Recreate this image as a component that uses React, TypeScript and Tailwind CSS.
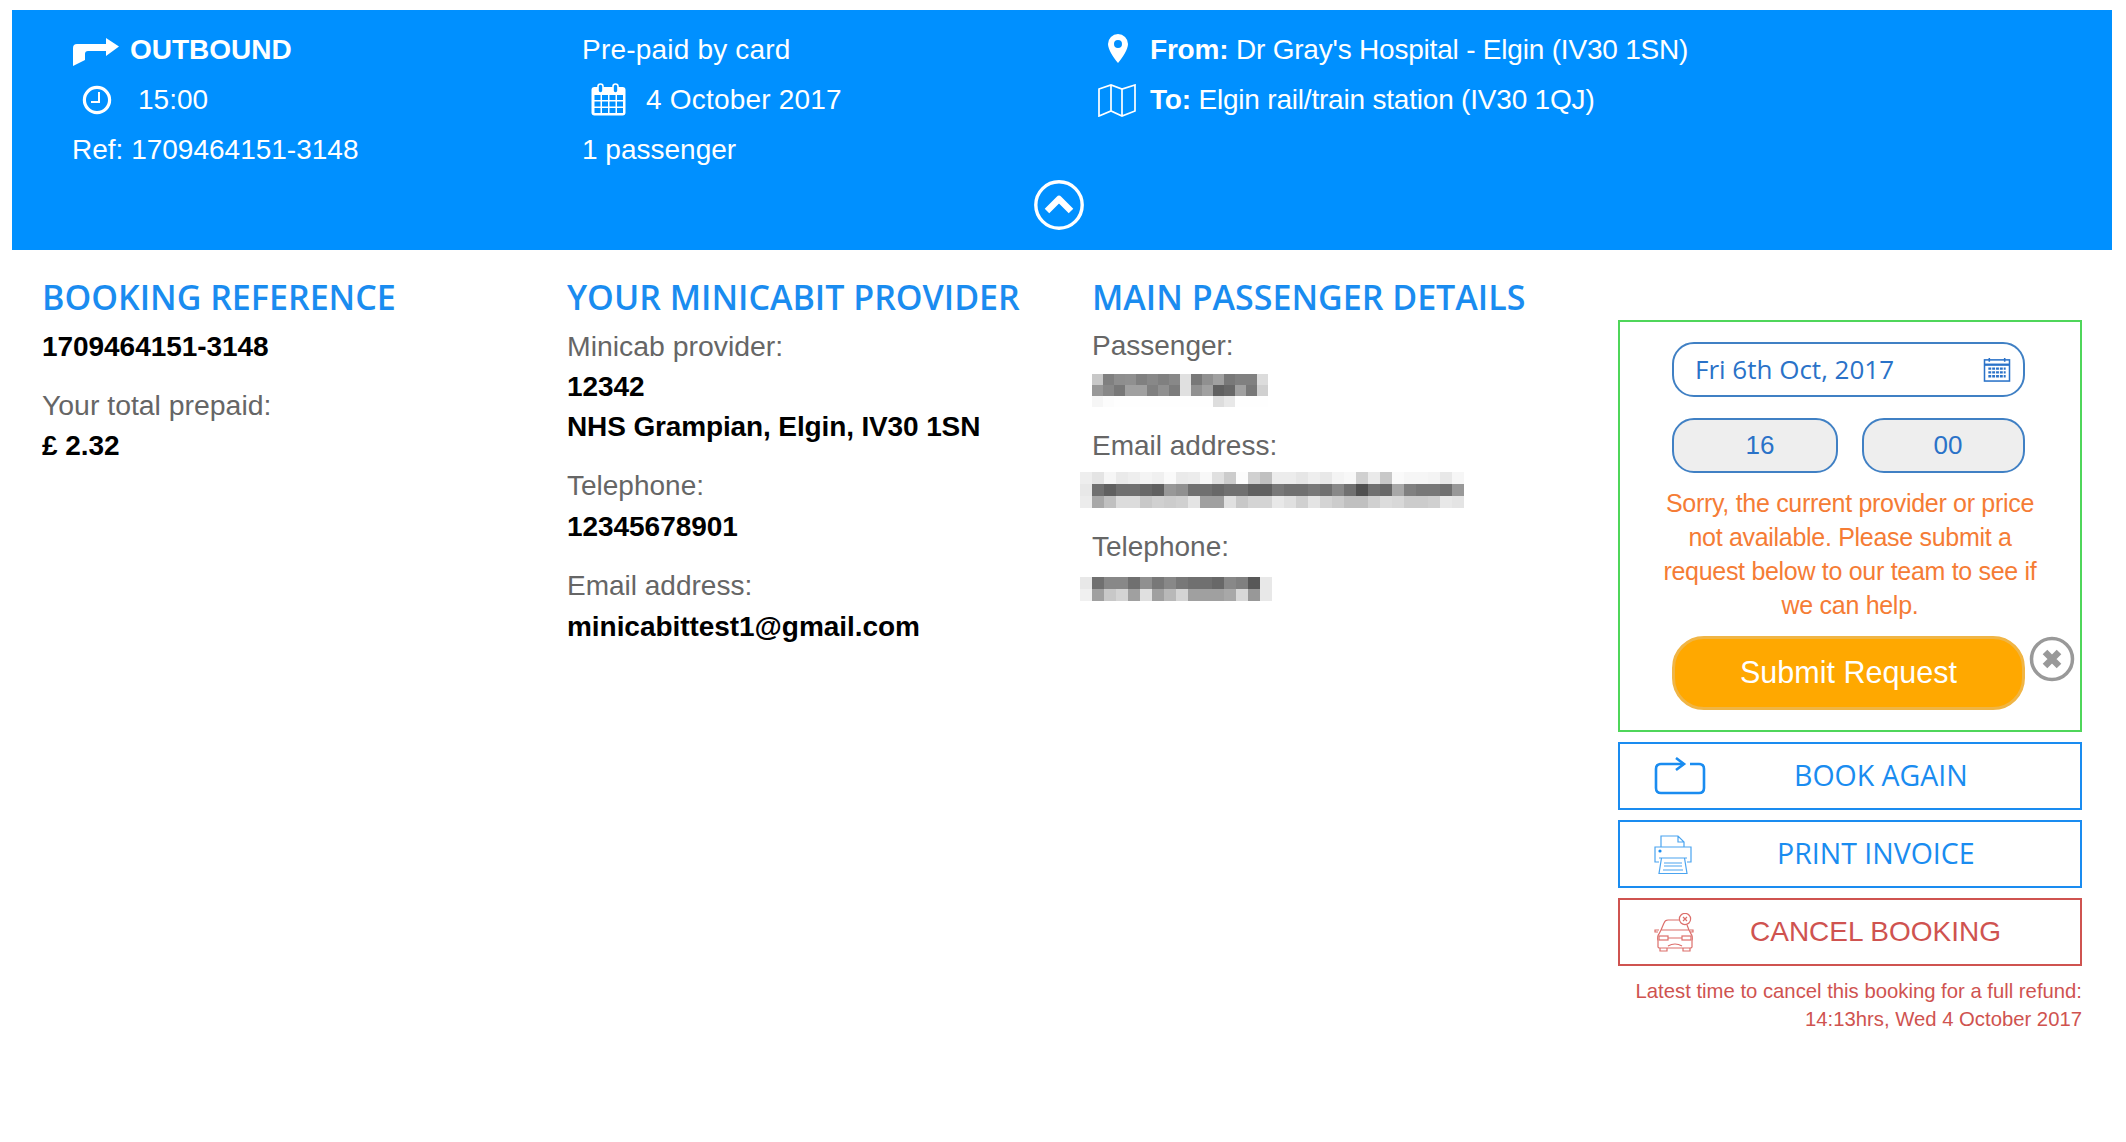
import React from "react";

const passengerCells = [
  ["c8","80","8e","90","80","88","80","88","e0","78","90","a0","78","80","80","dc"],
  ["98","88","78","a0","a0","80","90","7c","e0","90","a0","60","68","a0","78","d0"],
  ["f6","fc","fe","fe","fe","fe","fe","fe","fe","fe","fe","dd","e8","fe","fe","fe"],
];
const emailCells = [
  ["ee","e4","f6","ea","ee","f4","f0","fa","ea","ec","f8","e0","cc","fc","d0","c0","ec","ec","e6","ee","e8","f4","f8","d0","ea","c8","fa","f6","f6","f4","e8","f6"],
  ["e8","70","60","70","70","68","60","98","90","70","70","68","70","70","60","60","78","70","70","78","70","88","70","50","70","68","a8","80","78","78","70","98"],
  ["ec","a8","c0","dc","dc","c8","d0","cc","d0","e4","a0","a0","e0","c8","d4","d4","e8","e0","d0","e4","d4","cc","c0","c0","d0","dc","d8","cc","cc","d0","e8","e4"],
];
const phoneCells = [
  ["e8","70","88","88","70","90","78","88","78","70","70","68","88","80","58","e8"],
  ["f0","a0","c8","d4","a0","e0","a0","b8","d4","a0","a0","a0","a8","d8","98","e8"],
];

const Pixels = ({ rows, size, className }: { rows: string[][]; size: number; className?: string }) => (
  <svg width={rows[0].length * size} height={rows.length * size} className={className} shapeRendering="crispEdges">
    {rows.map((row, y) =>
      row.map((v, x) => <rect key={`${x}-${y}`} x={x * size} y={y * size} width={size} height={size} fill={`#${v}${v}${v}`} />)
    )}
  </svg>
);

const BookingInfo = ({ label, wide, children }: { label: string; wide?: boolean; children: React.ReactNode }) => (
  <div className="mb-5">
    <div className={wide ? "text-[#666666] text-[28.4px] leading-[38px] mb-[2px]" : "text-[#666666] text-[28px] leading-[38px] mb-[2px]"}>{label}</div>
    {children}
  </div>
);

const Value = ({ children }: { children: React.ReactNode }) => (
  <div className="font-bold text-black leading-[40px] tracking-[-0.05px]">{children}</div>
);

const Heading = ({ children }: { children: React.ReactNode }) => (
  <h2 className="font-['Open_Sans',sans-serif] font-semibold text-[34px] leading-[40px] text-[#1a8cf0] mb-[10px]">{children}</h2>
);

export default function App() {
  return (
    <div className="min-h-[1142px] bg-white pt-[10px] pl-[12px] pr-[14px] font-['Liberation_Sans',Arial,sans-serif] text-[28px]">
      <div className="h-[240px] bg-[#0090ff] text-white pt-[15px]">
        <div className="flex">
          <div className="w-[570px] pl-[61px]">
            <div className="h-[50px] flex items-center">
              <svg viewBox="0 0 46 28" className="w-[46px] h-[28px] mr-[11px] mt-[4px]" fill="white">
                <path d="M0 28V10q0-4 4-4h29V0l13 8.5L33 18v-5H15q-3 0-3 3v6z" />
              </svg>
              <b>OUTBOUND</b>
            </div>
            <div className="h-[50px] flex items-center pl-[9px]">
              <svg viewBox="0 0 30 30" className="w-[30px] h-[30px] mr-[26px]" fill="none" stroke="white" strokeWidth="3.2">
                <circle cx="15" cy="15" r="12.6" />
                <path d="M17 7v10H9" strokeWidth="2" />
              </svg>
              <span>15:00</span>
            </div>
            <div className="h-[50px] flex items-center ml-[-1px]">Ref: 1709464151-3148</div>
          </div>
          <div className="w-[523px]">
            <div className="h-[50px] flex items-center tracking-[0.2px]">Pre-paid by card</div>
            <div className="h-[50px] flex items-center pl-[9px] tracking-[0.2px]">
              <svg viewBox="0 0 35 33" className="w-[35px] h-[33px] mr-[20px] mt-[-2px]">
                <rect x="0.5" y="4" width="34" height="28.5" rx="3" fill="white" />
                <rect x="3.5" y="12" width="6" height="5" fill="#0090ff" />
                <rect x="11" y="12" width="6" height="5" fill="#0090ff" />
                <rect x="18.5" y="12" width="6" height="5" fill="#0090ff" />
                <rect x="26" y="12" width="6" height="5" fill="#0090ff" />
                <rect x="3.5" y="18.5" width="6" height="5" fill="#0090ff" />
                <rect x="11" y="18.5" width="6" height="5" fill="#0090ff" />
                <rect x="18.5" y="18.5" width="6" height="5" fill="#0090ff" />
                <rect x="26" y="18.5" width="6" height="5" fill="#0090ff" />
                <rect x="3.5" y="25" width="6" height="5" fill="#0090ff" />
                <rect x="11" y="25" width="6" height="5" fill="#0090ff" />
                <rect x="18.5" y="25" width="6" height="5" fill="#0090ff" />
                <rect x="26" y="25" width="6" height="5" fill="#0090ff" />
                <rect x="7" y="1" width="5" height="9" rx="2.5" fill="#0090ff" stroke="white" strokeWidth="1.6" />
                <rect x="22" y="1" width="5" height="9" rx="2.5" fill="#0090ff" stroke="white" strokeWidth="1.6" />
              </svg>
              <span>4 October 2017</span>
            </div>
            <div className="h-[50px] flex items-center">1 passenger</div>
          </div>
          <div className="tracking-[-0.2px]">
            <div className="h-[50px] flex items-center">
              <svg viewBox="0 0 20 29" className="w-[20px] h-[29px] ml-[3px] mr-[22px] mt-[-3px]">
                <path fillRule="evenodd" fill="white" d="M10 0a10 10 0 0 1 10 10c0 5-5 13-10 19C5 23 0 15 0 10A10 10 0 0 1 10 0zm0 6a4 4 0 1 0 0 8 4 4 0 0 0 0-8z" />
              </svg>
              <span><b>From:</b> Dr Gray's Hospital - Elgin (IV30 1SN)</span>
            </div>
            <div className="h-[50px] flex items-center">
              <svg viewBox="0 0 38 33" className="w-[38px] h-[33px] ml-[-7px] mr-[14px]" fill="none" stroke="white" strokeWidth="1.7">
                <path d="M1 5l12-4 11 4 13-4v26l-13 5-11-5-12 5zM13 1v26M24 5v27" />
              </svg>
              <span><b>To:</b> Elgin rail/train station (IV30 1QJ)</span>
            </div>
          </div>
        </div>
        <div className="flex justify-center mt-[5px] pr-[7px]">
          <svg viewBox="0 0 50 50" className="w-[50px] h-[50px]" fill="none" stroke="white">
            <circle cx="25" cy="25" r="23.2" strokeWidth="3.4" />
            <path d="M13 31l12-12 12 12" strokeWidth="6.4" strokeLinejoin="round" />
          </svg>
        </div>
      </div>

      <div className="flex pt-[27px] pl-[30px] pr-[28px]">
        <div className="w-[525px]">
          <Heading>BOOKING REFERENCE</Heading>
          <div className="mb-[19px]"><Value>1709464151-3148</Value></div>
          <BookingInfo wide label="Your total prepaid:"><Value>£ 2.32</Value></BookingInfo>
        </div>
        <div className="w-[525px]">
          <Heading>YOUR MINICABIT PROVIDER</Heading>
          <BookingInfo wide label="Minicab provider:">
            <Value>12342</Value>
            <div className="font-bold text-black leading-[40px] tracking-[-0.13px]">NHS Grampian, Elgin, IV30 1SN</div>
          </BookingInfo>
          <BookingInfo label="Telephone:"><Value>12345678901</Value></BookingInfo>
          <BookingInfo label="Email address:"><Value>minicabittest1@gmail.com</Value></BookingInfo>
        </div>
        <div className="w-[526px]">
          <Heading>MAIN PASSENGER DETAILS</Heading>
          <BookingInfo label="Passenger:">
            <Pixels rows={passengerCells} size={11} className="mt-[9px] mb-[6px]" />
          </BookingInfo>
          <BookingInfo label="Email address:">
            <Pixels rows={emailCells} size={12} className="ml-[-12px] mt-[7px] mb-[1px]" />
          </BookingInfo>
          <BookingInfo label="Telephone:">
            <Pixels rows={phoneCells} size={12} className="ml-[-12px] mt-[11px]" />
          </BookingInfo>
        </div>

        <div className="w-[464px] shrink-0 mt-[43px]">
          <div className="relative h-[412px] border-2 border-[#4fd65a] pl-[52px] pr-[55px] pt-[20px]">
            <div className="h-[55px] rounded-[22px] border-2 border-[#4080c4] flex items-center justify-between pl-[21px] pr-[12px] font-['Open_Sans',sans-serif] text-[26px] text-[#2a72c8]">
              <span>Fri 6th Oct, 2017</span>
              <svg viewBox="0 0 28 26" className="w-[28px] h-[25px]" fill="none" stroke="#2a72c8" strokeWidth="1.6">
                <rect x="1" y="3" width="26" height="22" />
                <path d="M1 8h26" strokeWidth="2.4" />
                <path d="M6 1v4M22 1v4" />
                <path d="M5 12h18M5 16h18M5 20h18" strokeWidth="2.4" strokeDasharray="3 1" />
              </svg>
            </div>
            <div className="flex justify-between mt-[21px]">
              <div className="w-[166px] h-[55px] rounded-[22px] border-2 border-[#4080c4] bg-[#eeeeee] text-[#2a72c8] flex items-center justify-center pl-[10px] text-[26px]">16</div>
              <div className="w-[163px] h-[55px] rounded-[22px] border-2 border-[#4080c4] bg-[#eeeeee] text-[#2a72c8] flex items-center justify-center pl-[9px] text-[26px]">00</div>
            </div>
            <p className="mt-[13px] ml-[-20px] mr-[-23px] text-center text-[25px] leading-[34px] tracking-[-0.3px] text-[#f57c35]">
              Sorry, the current provider or price not available. Please submit a request below to our team to see if we can help.
            </p>
            <div className="relative mt-[14px]">
              <div className="h-[74px] rounded-[32px] border-[3px] border-[#f0b545] bg-[#ffa800] text-white text-[30.5px] flex items-center justify-center">Submit Request</div>
              <svg viewBox="0 0 46 46" className="absolute right-[-50px] top-0 w-[46px] h-[46px]" fill="none" stroke="#999999">
                <circle cx="23" cy="23" r="20.5" strokeWidth="3.5" />
                <path d="M16 16l14 14M30 16L16 30" strokeWidth="6.5" />
              </svg>
            </div>
          </div>

          <div className="mt-[10px] h-[68px] border-2 border-[#1a8cf0] text-[#1a8cf0] flex items-center pl-[34px] pb-[2px]">
            <svg viewBox="0 0 52 38" className="w-[52px] h-[38px] mt-[2px]" fill="none" stroke="#1a8cf0" strokeWidth="2.6">
              <path d="M36 7h9q5 0 5 5v19q0 5-5 5H7q-5 0-5-5V12q0-5 5-5h23" />
              <path d="M22 1l8 6-8 6" />
            </svg>
            <span className="font-['Open_Sans',sans-serif] ml-[88px] text-[28.5px]">BOOK AGAIN</span>
          </div>
          <div className="mt-[10px] h-[68px] border-2 border-[#1a8cf0] text-[#1a8cf0] flex items-center pl-[34px] pb-[2px]">
            <svg viewBox="0 0 38 39" className="w-[38px] h-[39px] mt-[2px]" fill="none" stroke="#4aa4f0" strokeWidth="1.2">
              <path d="M7 12V1h17l6 6v5M24 1v6h6" />
              <path d="M33 27h4V12H1v15h4" />
              <circle cx="6" cy="16" r="1.6" fill="#1a8cf0" stroke="none" />
              <path d="M5 23h28M7.5 23L5 38.5h28L30.5 23M10 28h18M10 31h18M9 35h20" />
            </svg>
            <span className="font-['Open_Sans',sans-serif] ml-[85px] text-[28.5px]">PRINT INVOICE</span>
          </div>
          <div className="mt-[10px] h-[68px] border-2 border-[#cf5350] text-[#cf5350] flex items-center pl-[34px]">
            <svg viewBox="0 0 40 39" className="w-[40px] h-[39px]" fill="none" stroke="#dc6f6b" strokeWidth="1.2">
              <circle cx="31" cy="6" r="5.6" />
              <path d="M29 4l4 4M33 4l-4 4" />
              <path d="M25 7H14q-3 0-4 3l-3 7M7 17h28l-2-5" />
              <path d="M5 21q-2 2-1 7v6q0 1 2 1h30q2 0 2-1v-6q1-5-1-7l-2-4M5 21l2-4" />
              <path d="M4 19H1v-2h4M36 17h3v2h-3" />
              <rect x="5" y="23" width="9" height="4" />
              <rect x="28" y="23" width="9" height="4" />
              <path d="M14 25h14M14 33q7-4 14 0M6 35v3h7v-3M29 35v3h7v-3" />
            </svg>
            <span className="ml-[56px] text-[28px]">CANCEL BOOKING</span>
          </div>
          <div className="mt-[11px] text-right text-[#cf5350] text-[20.3px] leading-[28px]">
            Latest time to cancel this booking for a full refund:<br />14:13hrs, Wed 4 October 2017
          </div>
        </div>
      </div>
    </div>
  );
}
